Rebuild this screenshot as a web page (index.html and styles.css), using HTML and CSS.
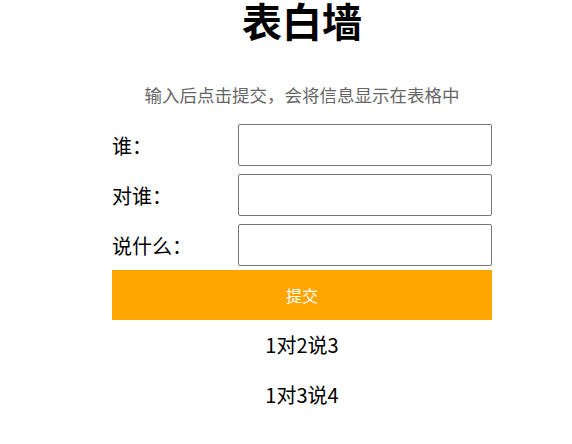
FILE: index.html
```html
<!DOCTYPE html>
<html lang="zh">
<head>
<meta charset="utf-8">
<title>表白墙</title>
<link rel="stylesheet" href="styles.css">
</head>
<body>
<div class="wall">
  <h1 class="title">表白墙</h1>
  <p class="hint">输入后点击提交，会将信息显示在表格中</p>
  <div class="row"><span class="label">谁：</span><input class="field" type="text"></div>
  <div class="row"><span class="label">对谁：</span><input class="field" type="text"></div>
  <div class="row"><span class="label">说什么：</span><input class="field" type="text"></div>
  <button class="submit" type="button">提交</button>
  <div class="msg">1对2说3</div>
  <div class="msg">1对3说4</div>
</div>
</body>
</html>
```
FILE: styles.css
```css
* { box-sizing: border-box; }
body {
  margin: 0;
  font-family: "Noto Sans CJK SC", "Noto Sans", sans-serif;
  color: #000;
  background: #fff;
}
.wall {
  width: 380px;
  margin-left: 112px;
}
.title {
  margin: 0;
  height: 40px;
  line-height: 40px;
  font-size: 40px;
  font-weight: 700;
  text-align: center;
}
.hint {
  margin: 30px 0 0;
  height: 50px;
  line-height: 50px;
  font-size: 17.5px;
  color: #666;
  text-align: center;
}
.row {
  height: 50px;
  display: grid;
  grid-template-columns: 126px 1fr;
  align-items: center;
}
.label {
  font-size: 20px;
}
.field {
  height: 42px;
  width: 100%;
  border: 1px solid #767676;
  border-radius: 2px;
  margin: 0;
}
.submit {
  display: block;
  width: 100%;
  height: 50px;
  border: none;
  margin: 0;
  background: #ffa500;
  color: #fff;
  font-family: inherit;
  font-size: 16px;
}
.msg {
  height: 50px;
  line-height: 50px;
  font-size: 20px;
  text-align: center;
}
```
